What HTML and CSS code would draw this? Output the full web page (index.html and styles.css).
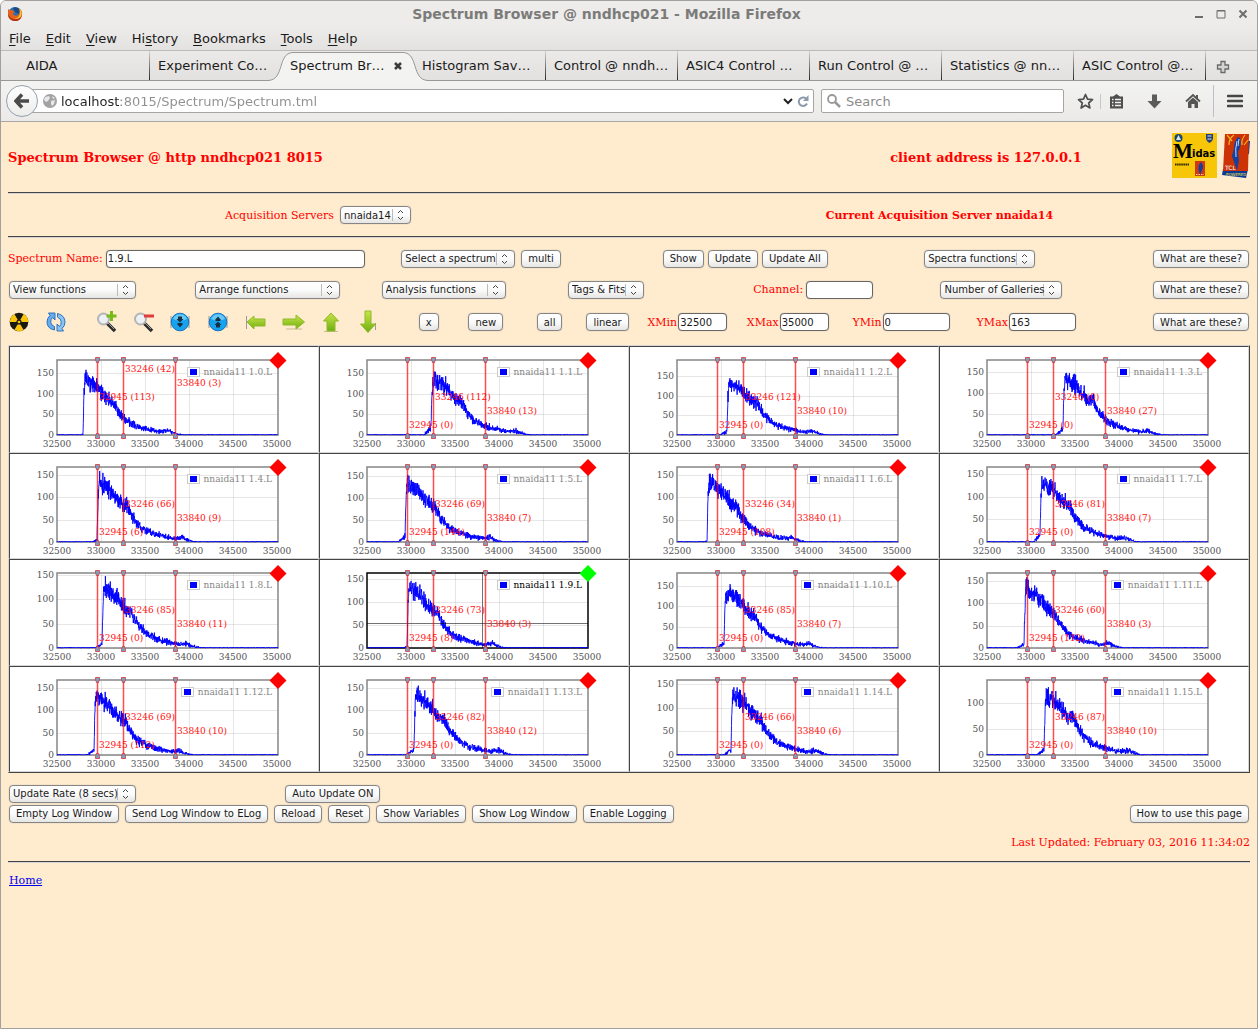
FILE: index.html
```html
<!DOCTYPE html>
<html lang="en">
<head>
    <meta charset="UTF-8">
    <meta name="viewport" content="width=device-width, initial-scale=1.0">
    <title>Spectrum Browser @ nndhcp021</title>
    <link rel="stylesheet" href="styles.css">
</head>
<body>
<div class="window">
    <header class="chrome">
        <div class="titlebar">
            <svg class="firefox" width="16" height="16" viewBox="0 0 16 16" aria-hidden="true">
                <circle cx="8" cy="8" r="7" fill="#2a6fb5"/>
                <path d="M6 2 Q10 0 13 4 L12 8 L8 6 Z" fill="#174a86"/>
                <path d="M1 3 Q2 4 3 4 Q5 3 6 5 L8 6 Q6 7 6 8 Q8 11 11 9 Q14 6 12 2 Q16 5 15 9 Q14 15 8 15 Q1 15 1 8 Z" fill="#e2611b"/>
                <path d="M12 2 Q16 6 14 10 Q12 14 7 13 Q13 12 13 6 Z" fill="#fbc42d"/>
                <path d="M1 8 Q2 14 8 15 Q13 15 14 11 Q9 15 4 12 Q2 10 1 8Z" fill="#b52c12"/>
            </svg>
            <span class="title">Spectrum Browser @ nndhcp021 - Mozilla Firefox</span>
            <span class="winbuttons">
                <button class="plain" aria-label="Minimize"><svg width="10" height="10"><path d="M1 8H9" stroke="#6d6d6a" stroke-width="2"/></svg></button>
                <button class="plain" aria-label="Maximize"><svg width="10" height="10"><path d="M1 1.500H9V9H1ZM1 2H9" fill="none" stroke="#6d6d6a"/></svg></button>
                <button class="plain" aria-label="Close"><svg width="10" height="10"><path d="M1.500 1.500L8.500 8.500M8.500 1.500L1.500 8.500" stroke="#6d6d6a" stroke-width="2"/></svg></button>
            </span>
        </div>
        <nav class="menubar">
            <button class="plain"><u>F</u>ile</button>
            <button class="plain"><u>E</u>dit</button>
            <button class="plain"><u>V</u>iew</button>
            <button class="plain">Hi<u>s</u>tory</button>
            <button class="plain"><u>B</u>ookmarks</button>
            <button class="plain"><u>T</u>ools</button>
            <button class="plain"><u>H</u>elp</button>
        </nav>
        <div class="tabs">
            <button class="plain tab">AIDA</button>
            <button class="plain tab before">Experiment Co…</button>
            <div class="tab active">
                <svg class="tabshape" viewBox="0 0 160 30" preserveAspectRatio="none" aria-hidden="true">
                    <path d="M0 29.500C17 29 9 2 25 1.500H135C151 2 143 29 160 29.500V30H0Z" fill="#f3f3f2"/>
                    <path d="M0 29.500C17 29 9 2 25 1.500H135C151 2 143 29 160 29.500" fill="none" stroke="#999896"/>
                </svg>
                <span class="tabtext">Spectrum Br…</span>
                <button class="plain close" aria-label="Close tab"><svg width="10" height="10"><path d="M2 2L8 8M8 2L2 8" stroke="#3a3a38" stroke-width="2.500"/></svg></button>
            </div>
            <button class="plain tab">Histogram Sav…</button>
            <button class="plain tab">Control @ nndh…</button>
            <button class="plain tab">ASIC4 Control …</button>
            <button class="plain tab">Run Control @ …</button>
            <button class="plain tab">Statistics @ nn…</button>
            <button class="plain tab">ASIC Control @…</button>
            <button class="plain newtab" aria-label="New tab"><svg width="14" height="14"><path d="M5 1.500H9V5H12.500V9H9V12.500H5V9H1.500V5H5Z" fill="#d4d4d2" stroke="#6a6a68" stroke-width="1.300"/></svg></button>
        </div>
        <div class="navbar">
            <button class="plain back" aria-label="Back"><svg width="16" height="16" viewBox="0 0 16 16"><path d="M8 1.500L2 8L8 14.500M2.500 8H15" fill="none" stroke="#4b4b4b" stroke-width="3.500"/></svg></button>
            <div class="urlbox">
                <svg width="14" height="14" viewBox="0 0 14 14" aria-hidden="true"><circle cx="7" cy="7" r="7" fill="#a3a3a3"/><path d="M2 3L6 2L7 4L5 7L3 8L1 6ZM8 7L12 6L11 10L9 12L8 10ZM9 2L12 4L10 5Z" fill="#e8e8e8"/></svg>
                <input class="url" type="text" aria-label="Address" value="localhost:8015/Spectrum/Spectrum.tml">
                <svg width="10" height="8" viewBox="0 0 10 8" aria-hidden="true"><path d="M1 2L5 6L9 2" fill="none" stroke="#222" stroke-width="2"/></svg>
                <svg width="12" height="12" viewBox="0 0 12 12" aria-hidden="true"><path d="M9 3.500A4.300 4.300 0 1 0 10 8.500" fill="none" stroke="#8d9bab" stroke-width="2"/><path d="M11.500 0V6H6Z" fill="#8d9bab"/></svg>
            </div>
            <div class="searchbox">
                <svg width="14" height="14" viewBox="0 0 14 14" aria-hidden="true"><circle cx="5" cy="5" r="4" fill="none" stroke="#999" stroke-width="1.800"/><path d="M8 8L13 13" stroke="#999" stroke-width="2.500"/></svg>
                <input class="search" type="text" placeholder="Search" aria-label="Search">
            </div>
            <div class="navicons">
                <button class="plain" aria-label="Bookmark this page"><svg width="17" height="17" viewBox="0 0 17 17"><path d="M8.500 1.500L10.500 6.200L15.500 6.700L11.700 10L12.900 15L8.500 12.300L4.100 15L5.300 10L1.500 6.700L6.500 6.200Z" fill="none" stroke="#4f4f4f" stroke-width="1.700" stroke-linejoin="round"/></svg></button>
                <button class="plain clip" aria-label="Bookmarks list"><svg width="15" height="15" viewBox="0 0 15 15"><path d="M1 2.500H4L7.500 0L11 2.500H14V14.500H1Z" fill="#4f4f4f"/><path d="M3 5.500H4.500M6 5.500H12M3 8.500H4.500M6 8.500H12M3 11.500H4.500M6 11.500H12" stroke="#f0f0f0" stroke-width="1.600"/></svg></button>
                <button class="plain down" aria-label="Downloads"><svg width="15" height="15" viewBox="0 0 15 15"><path d="M5 .5H10V7H14.500L7.500 14.500L.5 7H5Z" fill="#5b5b5b"/></svg></button>
                <button class="plain" aria-label="Home page"><svg width="16" height="16" viewBox="0 0 16 16"><path d="M1 8.500L8 2L15 8.500" fill="none" stroke="#555" stroke-width="1.800"/><path d="M3 9L8 4.500L13 9V15H9.500V11H6.500V15H3ZM11 2H13V6H11Z" fill="#555"/></svg></button>
                <button class="plain menu" aria-label="Menu"><svg width="16" height="14" viewBox="0 0 16 14"><path d="M1 2H15M1 7H15M1 12H15" stroke="#464646" stroke-width="2.600" stroke-linecap="round"/></svg></button>
            </div>
        </div>
    </header>

    <main class="page">
        <div class="heading">
            <h1>Spectrum Browser @ http nndhcp021 8015</h1>
            <h1 class="client">client address is 127.0.0.1</h1>
            <div class="logos">
                <svg width="45" height="45" viewBox="0 0 45 45" role="img" aria-label="Midas">
                    <rect width="45" height="45" fill="#f7c608"/>
                    <circle cx="6.500" cy="5" r="4" fill="#164a72"/><path d="M6.500 2L9 7H4Z" fill="#dde6e8"/>
                    <path d="M34 1H41V5Q41 8 37.500 10Q34 8 34 5Z" fill="#24407c"/><path d="M35.500 3H39.500M35.500 6H39.500" stroke="#dfe4ee"/>
                    <text class="logo-m" x="1" y="25">M</text>
                    <text class="logo-idas" x="20" y="24">idas</text>
                    <path d="M3 31.500H17" stroke="#2b2400" stroke-width="2" stroke-dasharray="1.500 .6"/>
                    <rect x="23" y="28" width="10" height="15" fill="#cf3a12"/>
                    <path d="M29 29Q25 33 27 38L28 42L31 35Q31 31 29 29Z" fill="#1b3f94"/>
                    <path d="M24 41.500H32" stroke="#f6d7b0" stroke-dasharray="1.500 1"/>
                </svg>
                <svg width="28" height="45" viewBox="0 0 28 45" role="img" aria-label="Tcl powered">
                    <path d="M1 36L26 36L24 45L0 42Z" fill="#0e3a94"/>
                    <path d="M26 8L28 8L27 21L24 22Z" fill="#0e3a94"/>
                    <path d="M3 1L27 1L26 38L1 38Z" fill="#cd3207"/>
                    <path d="M16 4Q12 8 12 15L10 23L12 29L15 38L17 27L16 19Q20 12 18 5Z" fill="#14419c"/>
                    <path d="M15 8Q13 16 14 24M17 6L16 13" stroke="#c7d6ef" fill="none"/>
                    <path d="M5 2L10 8M7 12Q7 5 12 2M20 12Q19 7 23 2M22 12L26 7" stroke="#f3b51a" stroke-width="1.200" fill="none"/>
                    <text class="logo-tcl" x="3" y="37">TCL</text>
                    <text class="logo-pow" x="4" y="43">POWERED</text>
                </svg>
            </div>
        </div>
        <hr>
        <div class="servers">
            <div><label for="server">Acquisition Servers</label>
                <select id="server" class="w-server"><option>nnaida14</option></select></div>
            <div class="current">Current Acquisition Server nnaida14</div>
        </div>
        <hr>
        <form class="controls" onsubmit="return false">
            <div class="row names">
                <div><label for="spectrum">Spectrum Name:</label><input id="spectrum" class="field wide" type="text" value="1.9.L"></div>
                <div class="spaced"><select class="w-spectrum" aria-label="Select a spectrum"><option>Select a spectrum</option></select><button class="btn">multi</button></div>
                <div class="show"><button class="btn">Show</button><button class="btn">Update</button><button class="btn">Update All</button></div>
                <div class="ends"><select class="w-spectra" aria-label="Spectra functions"><option>Spectra functions</option></select><button class="btn">What are these?</button></div>
            </div>
            <div class="row functions">
                <div><select class="w-view" aria-label="View functions"><option>View functions</option></select></div>
                <div><select class="w-arrange" aria-label="Arrange functions"><option>Arrange functions</option></select></div>
                <div><select class="w-analysis" aria-label="Analysis functions"><option>Analysis functions</option></select></div>
                <div><select class="w-tags" aria-label="Tags and fits"><option>Tags &amp; Fits</option></select></div>
                <div><label for="channel">Channel:</label><input id="channel" class="field mid" type="text"></div>
                <div><select class="w-galleries" aria-label="Number of Galleries"><option>Number of Galleries</option></select></div>
                <div><button class="btn">What are these?</button></div>
            </div>
            <div class="row tools">
                <button class="plain" aria-label="Acquire"><svg width="20" height="20" viewBox="0 0 20 20"><circle cx="10" cy="10" r="9.300" fill="#191712"/><path d="M10 10L5.400 2Q10 -.5 14.600 2ZM10 10H19.200Q19 15 14.600 18ZM10 10L5.400 18Q1 15 .8 10Z" fill="#fbc50e" transform="rotate(60 10 10)"/><circle cx="10" cy="10" r="2.600" fill="#191712"/><circle cx="10" cy="10" r="1.300" fill="#fbc50e"/></svg></button>
                <button class="plain" aria-label="Refresh"><svg width="20" height="20" viewBox="0 0 20 20"><path d="M8.500 18Q1 16.500 1 10Q1 6 4 3.500L2.500 1H9V8L6.500 5.500Q4.500 7.500 4.800 10.500Q5.200 13.500 8.500 14.500Z" fill="#66aef0" stroke="#2368b8" stroke-width=".9"/><path d="M11.500 1.500Q19 3.500 19 10Q19 14 16 16.500L17.500 19H11V12L13.500 14.500Q15.500 12.500 15.200 9.500Q14.800 6.500 11.500 5Z" fill="#8dc4f6" stroke="#2368b8" stroke-width=".9"/></svg></button>
                <button class="plain" aria-label="Zoom in"><svg width="22" height="22" viewBox="0 0 22 22"><path d="M10 11L19 20" stroke="#2c2c2c" stroke-width="3.600"/><path d="M11 11L18 18" stroke="#999"/><circle cx="7.500" cy="8" r="5.500" fill="#edf1f5" stroke="#b5b5b5" stroke-width="2"/><path d="M15.500 0V10M10.500 5H20.500" stroke="#76bb19" stroke-width="3"/></svg></button>
                <button class="plain" aria-label="Zoom out"><svg width="22" height="22" viewBox="0 0 22 22"><path d="M10 11L19 20" stroke="#2c2c2c" stroke-width="3.600"/><path d="M11 11L18 18" stroke="#999"/><circle cx="7.500" cy="8" r="5.500" fill="#edf1f5" stroke="#b5b5b5" stroke-width="2"/><path d="M11 5H21" stroke="#df3d3d" stroke-width="3"/></svg></button>
                <button class="plain" aria-label="Page down"><svg width="20" height="20" viewBox="0 0 20 20"><path d="M1 4V16M19 4V16" stroke="#999"/><circle cx="10" cy="10" r="8.800" fill="#16a3ee" stroke="#1671c5"/><path d="M3 7A7.500 7.500 0 0 1 17 7Q10 10 3 7Z" fill="#68c8f8"/><path d="M8 4.500H12V7H13.500L10 10.500L6.500 7H8ZM8 11H12L13 12L10 15.500L7 12Z" fill="#173044"/></svg></button>
                <button class="plain" aria-label="Page up"><svg width="20" height="20" viewBox="0 0 20 20"><path d="M1 4V16M19 4V16" stroke="#999"/><circle cx="10" cy="10" r="8.800" fill="#16a3ee" stroke="#1671c5"/><path d="M3 7A7.500 7.500 0 0 1 17 7Q10 10 3 7Z" fill="#68c8f8"/><path d="M8 15.500H12V13H13.500L10 9.500L6.500 13H8ZM8 9H12L13 8L10 4.500L7 8Z" fill="#173044"/></svg></button>
                <button class="plain" aria-label="Left"><svg width="22" height="20" viewBox="0 0 22 20"><defs><linearGradient id="g" x2="0" y2="1"><stop stop-color="#c9e544"/><stop offset="1" stop-color="#6fae12"/></linearGradient></defs><path d="M1.500 4V17" stroke="#999"/><path d="M2 10L9 4V7H20V14H9V17Z" fill="url(#g)" stroke="#8dbb2c"/></svg></button>
                <button class="plain" aria-label="Right"><svg width="24" height="20" viewBox="0 0 24 20"><path d="M4 17H20" stroke="#cbb994" stroke-width="1"/><path d="M22.500 10L14 3V7H1V13H14V17Z" fill="url(#g)" stroke="#8dbb2c"/></svg></button>
                <button class="plain arrow" aria-label="Up"><svg width="20" height="22" viewBox="0 0 20 22"><path d="M3 20.500H17" stroke="#cbb994" stroke-width="1"/><path d="M10 2L17.500 10H14V20H6V10H2.500Z" fill="url(#g)" stroke="#8dbb2c"/></svg></button>
                <button class="plain arrow" aria-label="Down"><svg width="18" height="24" viewBox="0 0 18 24"><path d="M16.500 13V20" stroke="#999"/><path d="M9 22.500L1.500 14H6V1H12V14H16.500Z" fill="url(#g)" stroke="#8dbb2c"/></svg></button>
                <div><button class="btn">x</button></div>
                <div><button class="btn">new</button></div>
                <div><button class="btn">all</button></div>
                <div><button class="btn">linear</button></div>
                <div><label for="xmin">XMin</label><input id="xmin" class="field small" type="text" value="32500"></div>
                <div><label for="xmax">XMax</label><input id="xmax" class="field small" type="text" value="35000"></div>
                <div><label for="ymin">YMin</label><input id="ymin" class="field mid" type="text" value="0"></div>
                <div><label for="ymax">YMax</label><input id="ymax" class="field mid" type="text" value="163"></div>
                <div class="last"><button class="btn">What are these?</button></div>
            </div>
        </form>

        <table class="gallery" id="gallery"></table>

        <div class="row update">
            <div><select class="w-rate" aria-label="Update rate"><option>Update Rate (8 secs)</option></select></div>
            <div><button class="btn">Auto Update ON</button></div>
        </div>
        <div class="row log">
            <button class="btn">Empty Log Window</button>
            <button class="btn">Send Log Window to ELog</button>
            <button class="btn">Reload</button>
            <button class="btn">Reset</button>
            <button class="btn">Show Variables</button>
            <button class="btn">Show Log Window</button>
            <button class="btn">Enable Logging</button>
            <button class="btn howto">How to use this page</button>
        </div>
        <p class="updated">Last Updated: February 03, 2016 11:34:02</p>
        <hr>
        <p class="home"><a href="#">Home</a></p>
    </main>
</div>
<script src="charts.js"></script>
</body>
</html>
```
FILE: styles.css
```css
* { box-sizing: border-box; }
html, body { height: 100%; }
body { margin: 0; background: #fff; font-family: "DejaVu Serif", serif; font-size: 11px; color: red; }
.window { min-height: 100vh; background: #ffebcd; border: 1px solid #a2a09e; border-radius: 6px 6px 0 0; overflow: hidden; }

/* browser chrome */
.chrome { font-family: "DejaVu Sans", sans-serif; font-size: 13px; color: #1a1a1a; background: #edeceb; border-bottom: 1px solid #a9a7a5; }
.plain { background: none; border: 0; padding: 0; margin: 0; font: inherit; color: inherit; }
.plain svg { display: block; }
.titlebar { display: flex; align-items: center; height: 25px; padding: 0 9px 0 6px; }
.title { flex: 1; padding-right: 4px; text-align: center; font-size: 14px; font-weight: bold; color: #7b7b79; }
.winbuttons { display: flex; gap: 12px; }
.menubar { display: flex; align-items: center; gap: 15px; height: 25px; padding: 0 8px; border-bottom: 1px solid #bcbab8; background: linear-gradient(#edeceb, #e3e2e0); }
.menubar u { text-underline-offset: 2px; }
.tabs { display: flex; height: 30px; padding-left: 17px; border-bottom: 1px solid #999896; background: linear-gradient(#ebeae9, #e2e1df); }
.tab { position: relative; flex: 0 1 132px; min-width: 0; padding: 0 8px; text-align: left; white-space: nowrap; border-right: 1px solid; border-image: linear-gradient(#d8d7d5, #222) 1; }
.tab.before { border-image: none; border-color: transparent; }
.tab.active { display: flex; align-items: center; justify-content: space-between; padding-right: 10px; border-image: none; border-color: transparent; }
.tabshape { position: absolute; left: -14px; top: 0; width: 160px; height: 30px; }
.tabtext, .close { position: relative; }
.newtab { padding: 2px 0 0 10px; }
.navbar { display: flex; align-items: center; height: 40px; padding-left: 5px; background: linear-gradient(#f3f3f2, #ebeae9); }
.back { position: relative; flex: none; display: flex; align-items: center; justify-content: center; width: 32px; height: 32px; margin-right: -8px; border: 1px solid #93a0ae; border-radius: 50%; background: linear-gradient(#fff, #ececeb); }
.urlbox, .searchbox { display: flex; align-items: center; height: 24px; background: #fff; border: 1px solid #a7a5a3; border-radius: 2px; }
.urlbox { flex: 1; gap: 4px; padding: 0 4px 0 12px; }
.searchbox { width: 243px; margin-left: 7px; padding-left: 5px; gap: 5px; }
.url, .search { flex: 1; min-width: 0; border: 0; padding: 0; outline: 0; font: inherit; background: none; }
.url { -webkit-text-fill-color: transparent; background: linear-gradient(90deg, #222 60px, #8f8f8d 60px); -webkit-background-clip: text; background-clip: text; }
.search::placeholder { color: #8c8c8a; opacity: 1; }
.navicons { display: flex; align-items: center; gap: 6px; width: 193px; padding-left: 13px; }
.clip { padding-left: 8px; border-left: 1px solid #c3c9d0; }
.clip, .down { margin-right: 17px; }
.menu { margin-left: 6px; padding: 9px 0 9px 13px; border-left: 1px solid #b9c0c8; }

/* page */
.page { padding: 0 7px; }
hr { height: 2px; margin: 0; border: 0; border-top: 1px solid #444; border-bottom: 1px solid #d8d3d8; }
.heading { display: grid; grid-template-columns: 1fr 29% 84px; align-items: center; height: 70px; }
h1 { margin: 0; font-size: 13px; }
.client { text-align: center; }
.logos { display: flex; justify-content: flex-end; gap: 5px; align-self: start; padding-top: 11px; }
.logo-m { font: bold 21px "Liberation Serif", serif; }
.logo-idas { font: bold 10px "DejaVu Sans", sans-serif; }
.logo-tcl { font: 6px "DejaVu Sans", sans-serif; fill: #fff; }
.logo-pow { font: 4px "DejaVu Sans", sans-serif; fill: #f5e04a; }
.servers { display: grid; grid-template-columns: 1fr 1fr; align-items: center; height: 42px; text-align: center; }
.servers > div { display: flex; align-items: center; justify-content: center; gap: 5px; }
.current { font-weight: bold; }

.controls { padding-top: 5px; }
.row { display: grid; align-items: center; }
.row > div { display: flex; align-items: center; }
.row label { margin-right: 2px; }
.names { grid-template-columns: 6fr 4fr 4fr 5fr; height: 31px; }
.names .spaced { gap: 4px; }
.names .show { gap: 2px; }
.names .ends { justify-content: space-between; }
.functions { grid-template-columns: repeat(5, 15%) 1fr auto; height: 31px; }
.tools { grid-template-columns: 3% 4% repeat(7, 3%) 5% 4% 5.5% 4% 5% 8% 8.5% 10% 1fr; grid-auto-flow: column; height: 34px; }
.tools > .plain { justify-self: start; padding-left: 1px; }
.tools > .arrow { padding-left: 3px; }
.tools label { margin-right: 0; }
.tools .last { justify-content: flex-end; }

.btn, select, .field { height: 18px; margin: 0 1px; font-family: "DejaVu Sans", sans-serif; font-size: 10px; color: #1a1a1a; border: 1px solid #858585; border-radius: 4px; box-shadow: 0 0 1px #999; }
.btn { padding: 0 6px; white-space: nowrap; background: linear-gradient(#fff, #fbfbfb 50%, #e6e5e3); }
select { appearance: none; padding: 0 0 0 3px; background: url("data:image/svg+xml,%3Csvg xmlns='http://www.w3.org/2000/svg' width='18' height='16'%3E%3Cpath d='M.5 2V14' stroke='%23bbb'/%3E%3Cpath d='M6 6L8.500 3.500L11 6M6 10L8.500 12.500L11 10' fill='none' stroke='%23444'/%3E%3C/svg%3E") right center no-repeat, linear-gradient(#fff, #fbfbfb 50%, #e6e5e3); }
.field { padding: 0 1px; background: #fff; border-color: #666; }
.wide { width: 259px; }
.mid { width: 67px; }
.small { width: 49px; }
.w-server { width: 71px; }
.w-spectrum { width: 114px; }
.w-spectra { width: 111px; }
.w-view, .w-rate { width: 127px; }
.w-arrange { width: 145px; }
.w-analysis { width: 124px; }
.w-tags { width: 76px; }
.w-galleries { width: 122px; }

/* spectra */
.gallery { width: 100%; height: 428px; margin-top: 6px; table-layout: fixed; border-collapse: separate; border-spacing: 0; background: #fff; border: 1px solid; border-color: #d6d6d6 #444 #444 #d6d6d6; }
.gallery td { padding: 0; text-align: center; vertical-align: top; border: 1px solid; border-color: #444 #d6d6d6 #d6d6d6 #444; }
.gallery svg { display: block; margin: 0 auto; font-family: "DejaVu Serif", serif; font-size: 9px; }
.tick { fill: #545454; }
.grid { stroke: #545454; stroke-opacity: .15; shape-rendering: crispEdges; }
.frame { fill: none; stroke: #868686; stroke-width: 1.5; }
.selected .frame { stroke: #000; }
.trace { fill: none; stroke: #00f; stroke-width: .9; }
.tag { stroke: #f00; stroke-opacity: .7; stroke-width: 1.5; }
.pin { fill: #7da0c0; stroke: #d22; stroke-opacity: .7; }
.taglabel { fill: #f11; }
.legend { fill: #868686; }
.selected .legend { fill: #000; }
.swatch { fill: #fff; stroke: #ccc; }
.blue { fill: #00f; }
.diamond { fill: #f00; }
.selected .diamond { fill: #0f0; }
.cursor { stroke: #000; stroke-opacity: .55; }

/* footer */
.update { grid-template-columns: 22% 1fr; gap: 3px; margin-top: 11px; height: 19px; }
.log { display: flex; gap: 4px; margin-top: 1px; height: 19px; }
.howto { margin-left: auto; }
.updated { margin: 0; padding: 13px 0 11px; text-align: right; line-height: 14px; }
.home { margin: 11px 1px; line-height: 14px; }
.home a { color: #00e; }
```
FILE: charts.js
```js
// name, max of the y axis, rising edge in pixels, counts under the three tags, height of the foot
var spectra = [
    ['1.0', 181, 27, 113, 42, 3, 1],
    ['1.1', 181, 65, 0, 112, 13, 20],
    ['1.2', 190, 51, 0, 121, 10, 10],
    ['1.3', 179, 77, 0, 0, 27, 16],
    ['1.4', 168, 41, 6, 66, 9, 3],
    ['1.5', 170, 39, 144, 69, 7, 12],
    ['1.6', 168, 31, 108, 34, 1, 1],
    ['1.7', 165, 54, 0, 81, 7, 16],
    ['1.8', 154, 46, 0, 85, 11, 8],
    ['1.9', 163, 41, 8, 73, 3, 2],
    ['1.10', 180, 48, 0, 85, 7, 12],
    ['1.11', 167, 38, 112, 60, 3, 8],
    ['1.12', 168, 38, 112, 69, 10, 12],
    ['1.13', 168, 48, 0, 82, 12, 12],
    ['1.14', 158, 55, 0, 66, 6, 12],
    ['1.15', 145, 58, 0, 87, 10, 12]
];

var LEFT = 43, TOP = 13, W = 221, H = 75;

// mean counts against distance from the rising edge
var profile = [[0, 100], [1, 136], [6, 128], [14, 114], [22, 90], [29, 80],
    [35, 54], [43, 33], [52, 22], [62, 15], [75, 8], [80, 9], [84, 11], [87, 7], [93, 2], [100, 0]];

function mean(d, foot) {
    if (d < -8) return 0;
    if (d < -1) return foot * (d + 8) / 7;
    if (d < 0) return foot + (100 - foot) * (d + 1);
    for (var i = 1; i < profile.length; i++) {
        if (d <= profile[i][0]) {
            var a = profile[i - 1], b = profile[i];
            return a[1] + (b[1] - a[1]) * (d - a[0]) / (b[0] - a[0]);
        }
    }
    return 0;
}

function trace(edge, ymax, foot, seed) {
    var pts = [], scale = Math.min(1, ymax / 170);
    function rnd() {
        seed = (seed * 16807) % 2147483647;
        return seed / 2147483647;
    }
    for (var x = 0; x <= W; x += 0.18) {
        var m = mean(x - edge, foot) * scale;
        var n = (rnd() + rnd() + rnd() - 1.5) * 1.8;
        var v = Math.max(0, m > 0.5 ? m + n * Math.sqrt(m) : rnd() * 2 - 0.5);
        pts.push((LEFT + x).toFixed(1) + ',' + (TOP + H - v * H / ymax).toFixed(1));
    }
    return pts.join(' ');
}

function text(cls, x, y, anchor, s) {
    return '<text class="' + cls + '" x="' + x + '" y="' + y + '" text-anchor="' + anchor + '">' + s + '</text>';
}

function chart(s, i) {
    var out = '', k, x, y;
    for (k = 0; k < 6; k++) {
        x = LEFT + 44 * k;
        if (k > 0 && k < 5) out += '<path class="grid" d="M' + (x + 0.5) + ' ' + TOP + 'v' + H + '"/>';
        out += text('tick', x, TOP + H + 12, 'middle', 32500 + 500 * k);
    }
    for (k = 0; k <= 150 && k <= s[1]; k += 50) {
        y = Math.round(TOP + H - k * H / s[1]);
        out += '<path class="grid" d="M' + LEFT + ' ' + (y + 0.5) + 'h' + W + '"/>';
        out += text('tick', LEFT - 3, y + 3, 'end', k);
    }
    out += '<rect class="frame" x="' + LEFT + '" y="' + TOP + '" width="' + W + '" height="' + H + '"/>';
    out += '<polyline class="trace" points="' + trace(s[2], s[1], s[6], 1009 + i * 7919) + '"/>';

    if (s[0] === '1.9') {
        out += '<path class="cursor" d="M' + LEFT + ' 63.5h' + W + 'M158.5 ' + TOP + 'v' + H + '"/>';
    }

    // legend
    x = LEFT + W - 90 - (s[0].length > 3 ? 6 : 0);
    out += '<rect class="swatch" x="' + (x - 0.5) + '" y="20.5" width="12" height="9"/>';
    out += '<rect class="blue" x="' + (x + 2) + '" y="22" width="7" height="6"/>';
    out += text('legend', LEFT + W - 6, 28, 'end', 'nnaida11 ' + s[0] + '.L');

    // tags
    var first = i === 0;
    var tags = [[40, 32945, s[3], first ? 40 : 68], [66, 33246, s[4], first ? 12 : 40], [118, 33840, s[5], first ? 26 : 54]];
    tags.forEach(function (t) {
        x = LEFT + t[0];
        out += '<path class="tag" d="M' + (x + 0.5) + ' ' + TOP + 'v' + H + '"/>';
        out += '<path class="pin" d="M' + (x - 1.5) + ' ' + (TOP - 2.5) + 'h4v2l-1 3h-2l-1 -3z"/>';
        out += '<path class="pin" d="M' + (x - 1.5) + ' ' + (TOP + H + 3.5) + 'h4v-2l-1 -3h-2l-1 3z"/>';
        out += text('taglabel', x + 2, TOP + t[3], 'start', t[1] + ' (' + t[2] + ')');
    });

    out += '<path class="diamond" d="M' + (LEFT + W) + ' 5l8.5 8.5l-8.5 8.5l-8.5 -8.5z"/>';
    return '<svg width="300" height="104"' + (s[0] === '1.9' ? ' class="selected"' : '') + '>' + out + '</svg>';
}

var html = '';
spectra.forEach(function (s, i) {
    if (i % 4 === 0) html += '<tr>';
    html += '<td>' + chart(s, i) + '</td>';
    if (i % 4 === 3) html += '</tr>';
});
document.getElementById('gallery').innerHTML = html;
```
